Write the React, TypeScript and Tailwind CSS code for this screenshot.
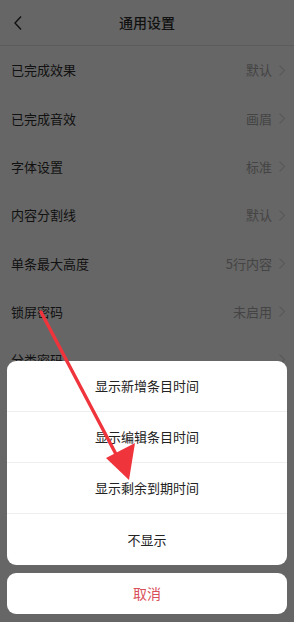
import React from "react";

const rows: [string, string][] = [
  ["已完成效果", "默认"],
  ["已完成音效", "画眉"],
  ["字体设置", "标准"],
  ["内容分割线", "默认"],
  ["单条最大高度", "5行内容"],
  ["锁屏密码", "未启用"],
  ["分类密码", ""],
  ["其他设置", ""],
];

const font = { fontFamily: '"Noto Sans CJK SC", "Noto Sans", sans-serif' };

function Chevron() {
  return (
    <svg width="8" height="13" viewBox="0 0 8 13" className="ml-[6px]">
      <path d="M1.5 1.5 L6.5 6.5 L1.5 11.5" fill="none" stroke="#5a5a5a" strokeWidth="1.2" />
    </svg>
  );
}

export default function App() {
  return (
    <div className="relative w-[294px] h-[622px] overflow-hidden bg-[#666666]" style={font}>
      <div className="h-[46px] flex items-center justify-center relative border-b border-[#5c5c5c]">
        <svg width="10" height="16" viewBox="0 0 10 16" className="absolute left-[13px] top-[15px]">
          <path d="M8 1.5 L2 8 L8 14.5" fill="none" stroke="#111" strokeWidth="1.4" />
        </svg>
        <span className="text-[14px] text-[#111] font-medium">通用设置</span>
      </div>
      <div className="flex flex-col">
        {rows.map(([l, v], i) => (
          <div key={i} className="h-[48.3px] flex items-center justify-between pl-[11px] pr-[8px]">
            <span className="text-[13px] text-[#111]">{l}</span>
            <div className="flex items-center">
              <span className="text-[13px] text-[#444]">{v}</span>
              <Chevron />
            </div>
          </div>
        ))}
      </div>

      <div className="absolute left-0 right-0 bottom-0 px-[7px] pb-[8px] flex flex-col gap-[8px]">
        <div className="bg-white rounded-[9px] flex flex-col">
          {["显示新增条目时间", "显示编辑条目时间", "显示剩余到期时间", "不显示"].map((t, i) => (
            <div
              key={i}
              className={`h-[51px] flex items-center justify-center text-[13px] text-[#222] ${i < 3 ? "border-b border-[#eeeeee]" : ""}`}
            >
              {t}
            </div>
          ))}
        </div>
        <div className="bg-white rounded-[9px] h-[41px] flex items-center justify-center text-[14px] text-[#d9505a]">
          取消
        </div>
      </div>

      <svg className="absolute left-0 top-0 pointer-events-none" width="294" height="622" viewBox="0 0 294 622">
        <line x1="41" y1="312" x2="118" y2="458" stroke="#f0343c" strokeWidth="3.4" strokeLinecap="round" />
        <polygon points="129,480 106,458 135,443" fill="#f0343c" />
      </svg>
    </div>
  );
}
